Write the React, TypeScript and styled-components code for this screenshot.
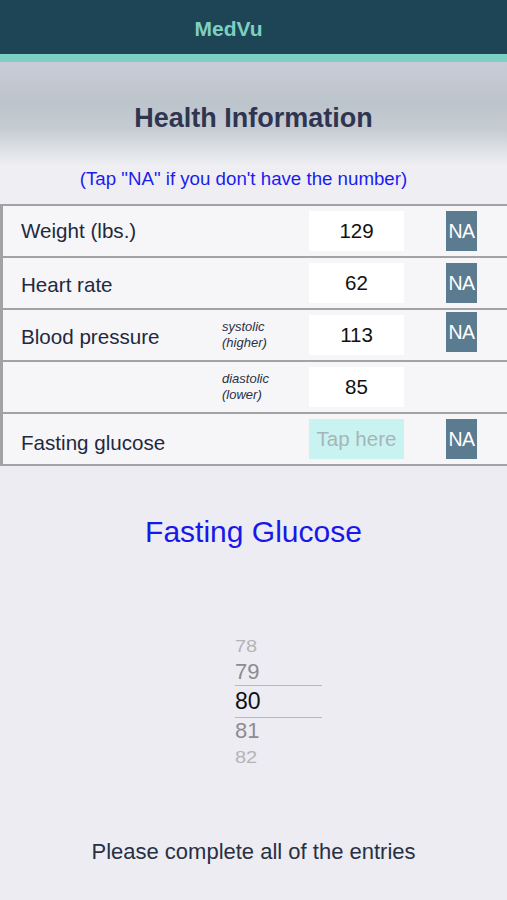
import React from "react";
import styled, { createGlobalStyle } from "styled-components";

const Global = createGlobalStyle`
  html, body { margin: 0; padding: 0; }
  body {
    width: 507px;
    height: 900px;
    overflow: hidden;
    background: #ededf2;
    font-family: "Liberation Sans", Arial, sans-serif;
  }
`;

const Page = styled.div`
  display: flex;
  flex-direction: column;
  width: 507px;
  height: 900px;
  background: #ececf2;
`;

const NavBar = styled.header`
  height: 54px;
  background: #1e4555;
  display: flex;
  align-items: center;
  justify-content: center;
  color: #7fcfc1;
  font-size: 21px;
  font-weight: bold;
  padding-top: 4px;
  padding-right: 50px;
  box-sizing: border-box;
`;

const Stripe = styled.div`
  height: 8px;
  background: #7dcec3;
`;

const Banner = styled.div`
  height: 104px;
  display: flex;
  align-items: center;
  justify-content: center;
  background: linear-gradient(
    to bottom,
    #c9ccd6 0%,
    #bcc4cc 40%,
    #c6ccd2 65%,
    #e2e4e8 88%,
    #efeff3 100%
  );
`;

const Title = styled.h1`
  margin: 0;
  padding-top: 8px;
  font-size: 27px;
  font-weight: bold;
  color: #2f3550;
`;

const Hint = styled.p`
  margin: 0;
  height: 38px;
  line-height: 26px;
  padding-right: 20px;
  text-align: center;
  font-size: 18.7px;
  color: #1c1cf0;
  background: #efeff3;
`;

const Table = styled.div`
  display: flex;
  flex-direction: column;
  border-top: 2px solid #a3a3a6;
  border-left: 3px solid #a3a3a6;
  background: #f6f6f8;
`;

const Row = styled.div`
  display: grid;
  grid-template-columns: 219px 87px 95px 42px 31px 1fr;
  align-items: center;
  height: 50px;
  border-bottom: 2px solid #a3a3a6;
  box-sizing: content-box;
`;

const Label = styled.div<{ $dy?: number }>`
  padding-left: 18px;
  font-size: 20.6px;
  color: #1f2940;
  transform: translateY(${(p) => p.$dy ?? 0}px);
`;

const SubLabel = styled.div`
  font-size: 13px;
  font-style: italic;
  line-height: 16px;
  color: #2a3145;
`;

const Field = styled.div<{ $empty?: boolean }>`
  grid-column: 3;
  height: 40px;
  display: flex;
  align-items: center;
  justify-content: center;
  background: ${(p) => (p.$empty ? "#c8f3f0" : "#ffffff")};
  color: ${(p) => (p.$empty ? "#a7b5b8" : "#111111")};
  font-size: 20.5px;
`;

const NA = styled.div<{ $dy?: number }>`
  grid-column: 5;
  height: 40px;
  display: flex;
  align-items: center;
  justify-content: center;
  background: #5b7b90;
  color: #ffffff;
  font-size: 19.5px;
  letter-spacing: -0.6px;
  transform: translateY(${(p) => p.$dy ?? 0}px);
`;

const Section = styled.div`
  display: flex;
  flex-direction: column;
  align-items: center;
`;

const PickerTitle = styled.h2`
  margin: 48px 0 0;
  font-size: 30px;
  font-weight: normal;
  color: #1818e8;
  line-height: 36px;
`;

const Picker = styled.div`
  margin-top: 83px;
  width: 87px;
  margin-left: 50px;
  display: flex;
  flex-direction: column;
`;

const PickItem = styled.div<{ $level: number; $selected?: boolean }>`
  height: ${(p) => (p.$selected ? 31 : 26)}px;
  display: flex;
  align-items: center;
  font-size: ${(p) => (p.$selected ? 23 : p.$level === 1 ? 22 : 20)}px;
  color: ${(p) =>
    p.$selected ? "#111111" : p.$level === 1 ? "#8c8c90" : "#b4b4b8"};
  border-top: ${(p) => (p.$selected ? "1px solid #b8b8bc" : "none")};
  border-bottom: ${(p) => (p.$selected ? "1px solid #b8b8bc" : "none")};
  transform: ${(p) => (p.$level === 2 ? "scaleY(0.8)" : "none")};
  transform-origin: center;
`;

const Footer = styled.p`
  margin: 69px 0 0;
  text-align: center;
  font-size: 22px;
  color: #283043;
`;

export default function App() {
  return (
    <>
      <Global />
      <Page>
        <NavBar>MedVu</NavBar>
        <Stripe />
        <Banner>
          <Title>Health Information</Title>
        </Banner>
        <Hint>(Tap "NA" if you don't have the number)</Hint>
        <Table>
          <Row>
            <Label>Weight (lbs.)</Label>
            <Field>129</Field>
            <NA>NA</NA>
          </Row>
          <Row>
            <Label $dy={2}>Heart rate</Label>
            <Field>62</Field>
            <NA>NA</NA>
          </Row>
          <Row>
            <Label $dy={2}>Blood pressure</Label>
            <SubLabel>
              systolic
              <br />
              (higher)
            </SubLabel>
            <Field>113</Field>
            <NA $dy={-3}>NA</NA>
          </Row>
          <Row>
            <div />
            <SubLabel>
              diastolic
              <br />
              (lower)
            </SubLabel>
            <Field>85</Field>
          </Row>
          <Row>
            <Label $dy={4}>Fasting glucose</Label>
            <Field $empty>Tap here</Field>
            <NA>NA</NA>
          </Row>
        </Table>
        <Section>
          <PickerTitle>Fasting Glucose</PickerTitle>
          <Picker>
            <PickItem $level={2}>78</PickItem>
            <PickItem $level={1}>79</PickItem>
            <PickItem $level={0} $selected>80</PickItem>
            <PickItem $level={1}>81</PickItem>
            <PickItem $level={2}>82</PickItem>
          </Picker>
          <Footer>Please complete all of the entries</Footer>
        </Section>
      </Page>
    </>
  );
}
